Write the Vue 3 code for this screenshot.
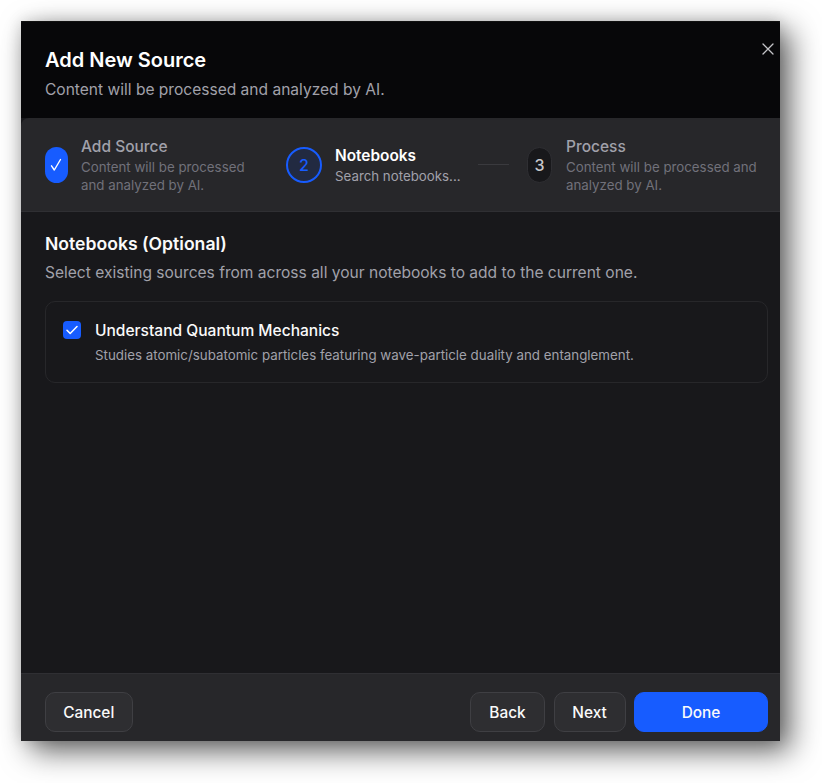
<script setup>
const steps = [
  { key: 'source', title: 'Add Source', desc: 'Content will be processed and analyzed by AI.', state: 'finished' },
  { key: 'notebooks', num: 2, title: 'Notebooks', desc: 'Search notebooks...', state: 'active' },
  { key: 'process', num: 3, title: 'Process', desc: 'Content will be processed and analyzed by AI.', state: 'todo' },
]
</script>

<template>
<div class="page">
  <div class="modal">
    <header class="head">
      <h1>Add New Source</h1>
      <p>Content will be processed and analyzed by AI.</p>
      <button class="close" aria-label="Close">
        <svg width="12" height="12" viewBox="0 0 12 12" fill="none" stroke="#c4c4c8" stroke-width="1.3" stroke-linecap="round">
          <path d="M1 1l10 10M11 1L1 11" />
        </svg>
      </button>
    </header>

    <div class="stepper">
      <template v-for="s in steps" :key="s.key">
        <div v-if="s.state == 'todo'" class="connector"></div>
        <div :class="'step ' + s.state">
          <div class="badge">
            <svg v-if="s.state == 'finished'" width="12" height="14" viewBox="0 0 12 14" fill="none" stroke="#fff" stroke-width="1.4" stroke-linecap="round" stroke-linejoin="round">
              <path d="M1.5 7.8L4.3 12 10.5 1.5" />
            </svg>
            <template v-else>{{ s.num }}</template>
          </div>
          <div class="step-text">
            <div class="step-title">{{ s.title }}</div>
            <div class="step-desc">{{ s.desc }}</div>
          </div>
        </div>
      </template>
    </div>

    <main class="body">
      <h2>Notebooks (Optional)</h2>
      <p class="hint">Select existing sources from across all your notebooks to add to the current one.</p>
      <div class="card">
        <div class="checkbox">
          <svg width="12" height="10" viewBox="0 0 12 10" fill="none" stroke="#fff" stroke-width="1.5" stroke-linecap="round" stroke-linejoin="round">
            <path d="M1 5.2L4.2 8.5 11 1.5" />
          </svg>
        </div>
        <div>
          <div class="card-title">Understand Quantum Mechanics</div>
          <div class="card-desc">Studies atomic/subatomic particles featuring wave-particle duality and entanglement.</div>
        </div>
      </div>
    </main>

    <footer class="foot">
      <button class="btn cancel">Cancel</button>
      <div class="foot-right">
        <button class="btn back">Back</button>
        <button class="btn next">Next</button>
        <button class="btn primary">Done</button>
      </div>
    </footer>
  </div>
</div>
</template>

<style>
html, body { background: #fff; }
</style>

<style scoped>
.page { padding: 21px 0 0 21px; width: 822px; height: 783px; box-sizing: border-box; overflow: hidden; font-family: Inter, "Liberation Sans", sans-serif; }
.modal {
  width: 759px; height: 720px;
  display: flex; flex-direction: column;
  background: #18181b;
  box-shadow: 10px 10px 28px rgba(0,0,0,.62), 0 0 14px rgba(0,0,0,.14);
}
.head { position: relative; height: 97px; box-sizing: border-box; padding: 24px 24px 0; background: #070709; border-top: 1px solid #111; border-radius: 3px 3px 0 0; }
h1 { margin: 0; font-size: 20px; line-height: 28px; font-weight: 600; color: #fff; }
.head p { margin: 5px 0 0; font-size: 15.55px; line-height: 22px; color: #a1a1aa; }
.close { position: absolute; top: 21px; right: 6px; width: 12px; height: 12px; padding: 0; display: flex; background: none; border: none; }

.stepper {
  height: 94px; box-sizing: border-box; padding: 0 24px;
  display: flex; align-items: center;
  background: #27272a; border-bottom: 1px solid #2f2f33;
  border-radius: 8px 0 0 0;
}
.step { display: flex; align-items: center; flex: none; }
.finished { width: 217px; margin-right: 24px; gap: 13.5px; }
.active { width: 175px; gap: 13px; }
.todo { width: 232px; gap: 14px; }
.badge { flex: none; box-sizing: border-box; height: 36px; display: flex; align-items: center; justify-content: center; border-radius: 18px; font-size: 16px; font-weight: 500; }
.finished .badge { width: 22.5px; background: #175cff; }
.active .badge { width: 36px; border: 2px solid #175cff; background: #222a41; color: #175cff; }
.todo .badge { width: 25px; border: 1px solid #2f2f33; background: #18181b; color: #c8c8cc; }
.connector { flex: none; width: 31px; height: 1px; margin: 0 18px 0 17px; background: #3a3a3e; }
.step-text { padding-top: 2px; }
.active .step-text { padding-top: 0; }
.step-title { font-size: 15.5px; line-height: 20px; font-weight: 500; color: #a1a1aa; }
.active .step-title { font-size: 15.4px; font-weight: 600; color: #fff; line-height: 21px; }
.step-desc { margin-top: 1px; font-size: 13.3px; line-height: 18px; color: #71717a; }
.active .step-desc { margin-top: 1px; color: #a1a1aa; }

.body { flex: 1; box-sizing: border-box; padding: 21px 12px 0 24px; }
h2 { margin: 0; font-size: 17.6px; line-height: 22px; font-weight: 600; color: #fafafa; }
.hint { margin: 8px 0 0; font-size: 15.55px; line-height: 20px; color: #a1a1aa; }
.card { margin-top: 18px; height: 82px; box-sizing: border-box; display: flex; gap: 14px; padding: 19px 18px 0 17px; border: 1px solid #27272a; border-radius: 10px; }
.checkbox { flex: none; width: 18px; height: 18px; display: flex; align-items: center; justify-content: center; background: #175cff; border-radius: 4px; }
.card-title { font-size: 15.55px; line-height: 20px; font-weight: 500; color: #fafafa; }
.card-desc { margin-top: 5px; font-size: 13.33px; line-height: 18px; color: #a1a1aa; }

.foot { height: 68px; box-sizing: border-box; padding: 18px 12px 0 23.5px; display: flex; align-items: flex-start; justify-content: space-between; background: #27272a; border-top: 1px solid #2f2f33; }
.foot-right { display: flex; gap: 8.5px; }
.btn { height: 40px; box-sizing: border-box; padding: 0; font: 500 15.4px Inter, "Liberation Sans", sans-serif; color: #fafafa; background: #2e2e31; border: 1px solid #3f3f43; border-radius: 10px; }
.cancel { width: 88.5px; }
.back { width: 75px; }
.next { width: 72px; }
.primary { width: 134px; background: #175cff; border-color: #175cff; }
</style>
